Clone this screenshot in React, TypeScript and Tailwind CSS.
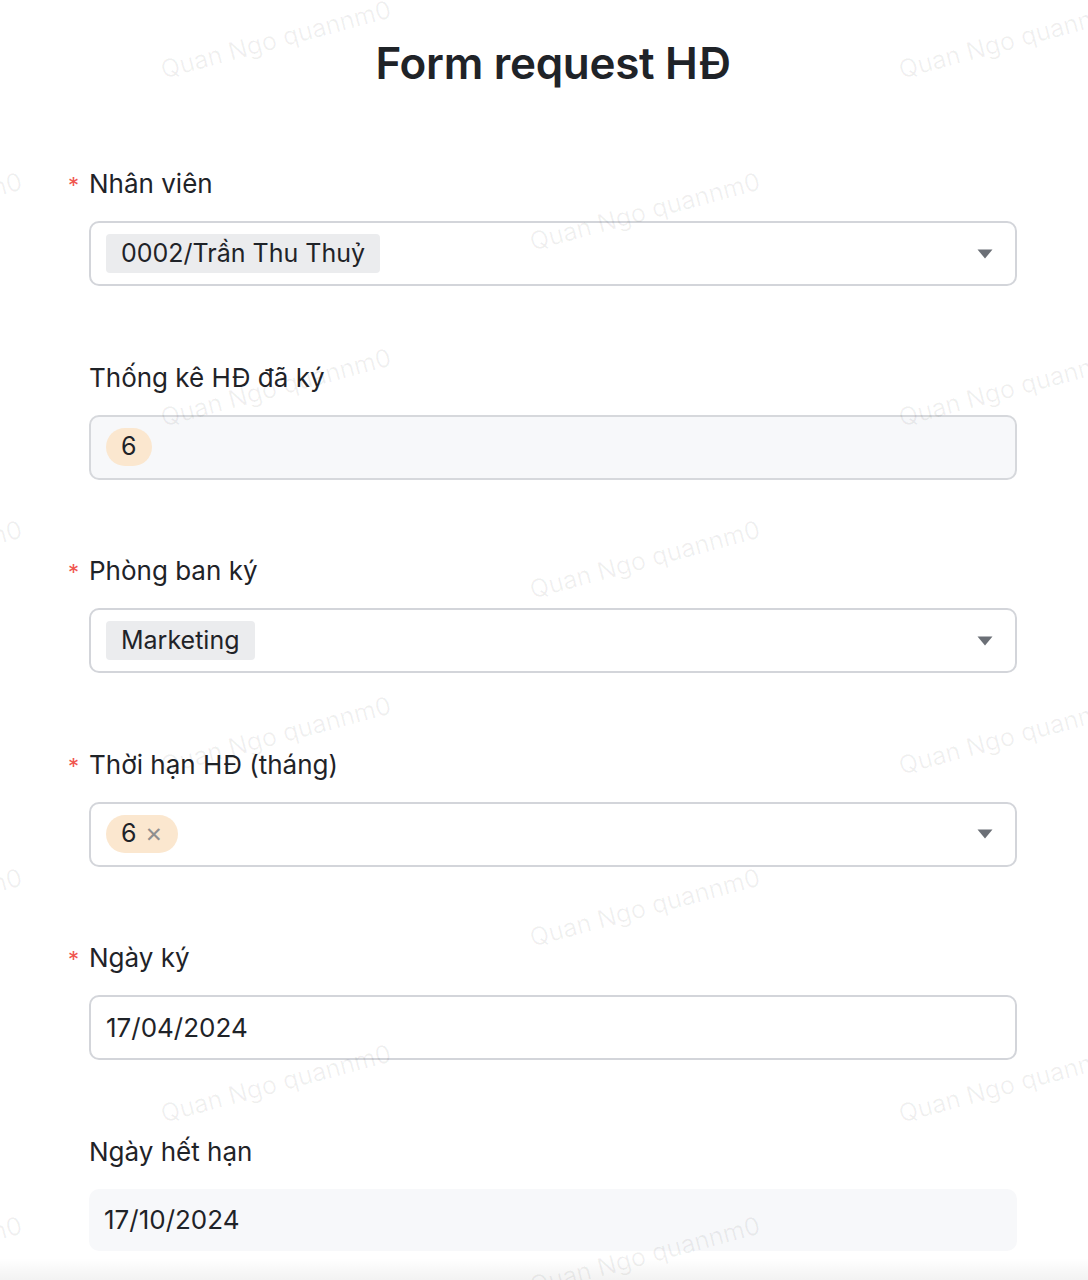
import React from 'react';

type Tag = { text: string; tone: 'gray' | 'peach'; closable?: boolean };

interface FieldProps {
  label: string;
  required?: boolean;
  disabled?: boolean;
  select?: boolean;
  tags?: Tag[];
  value?: string;
  plain?: boolean;
}

const Caret = () => (
  <svg width="16" height="10" viewBox="0 0 16 10" className="shrink-0">
    <path d="M0.5 0.5 H15.5 L8 9.5 Z" fill="#6b6f76" />
  </svg>
);

const TagChip = ({ tag }: { tag: Tag }) => {
  if (tag.tone === 'gray') {
    return (
      <span className="inline-flex h-[39px] items-center rounded-[4px] bg-[#ebecee] px-[15px] text-[25px] text-[#1f2328]">
        {tag.text}
      </span>
    );
  }
  return (
    <span className="inline-flex h-[38px] items-center gap-[8px] rounded-full bg-[#fbe7cf] px-[15px] text-[25px] text-[#1f2328]">
      {tag.text}
      {tag.closable && <span className="text-[21px] leading-none text-[#8f8f8f]">✕</span>}
    </span>
  );
};

const Field: React.FC<FieldProps> = ({ label, required, disabled, select, tags = [], value, plain }) => {
  const box = plain
    ? 'h-[62px] bg-[#f7f8fa]'
    : disabled
      ? 'h-[65px] border-2 border-[#d6d8dc] bg-[#f7f8fa]'
      : 'h-[65px] border-2 border-[#d3d5da] bg-white';

  return (
    <div className="mb-[73.5px] last:mb-0">
      <div className="flex h-[36px] items-center text-[26px] leading-[36px] text-[#1f2328]">
        <span className="-ml-[21px] w-[21px] self-start pt-[1px] text-[22px] text-[#f0564f]">
          {required ? '*' : ''}
        </span>
        {label}
      </div>
      <div className={`mt-[19px] flex items-center rounded-[10px] pl-[15px] pr-[22px] ${box}`}>
        <div className="flex flex-1 items-center gap-2">
          {tags.map((t, i) => (
            <TagChip key={i} tag={t} />
          ))}
          {value && <span className="text-[26px] text-[#1f2328]">{value}</span>}
        </div>
        {select && <Caret />}
      </div>
    </div>
  );
};

// staggered watermark grid
const marks: { x: number; y: number }[] = [];
for (let r = 0; r < 4; r++) {
  for (const x of [276, 1014]) marks.push({ x, y: 40 + r * 348 });
  for (const x of [-93, 645]) marks.push({ x, y: 212 + r * 348 });
}

export default function App() {
  return (
    <div className="relative h-[1280px] w-[1088px] overflow-hidden bg-white font-['Inter','Liberation_Sans',sans-serif]">
      <h1 className="pl-[89px] pr-[71px] pt-[30px] text-center text-[44px] font-semibold leading-[66px] tracking-[-0.3px] text-[#1f2328]">
        Form request HĐ
      </h1>

      <div className="mt-[70px] pl-[89px] pr-[71px]">
        <Field label="Nhân viên" required select tags={[{ text: '0002/Trần Thu Thuỷ', tone: 'gray' }]} />
        <Field label="Thống kê HĐ đã ký" disabled tags={[{ text: '6', tone: 'peach' }]} />
        <Field label="Phòng ban ký" required select tags={[{ text: 'Marketing', tone: 'gray' }]} />
        <Field
          label="Thời hạn HĐ (tháng)"
          required
          select
          tags={[{ text: '6', tone: 'peach', closable: true }]}
        />
        <Field label="Ngày ký" required value="17/04/2024" />
        <Field label="Ngày hết hạn" plain value="17/10/2024" />
      </div>

      {/* watermark */}
      <div className="pointer-events-none absolute inset-0">
        {marks.map((m, i) => (
          <span
            key={i}
            className="absolute -translate-x-1/2 -translate-y-1/2 -rotate-[15deg] whitespace-nowrap text-[25px] text-black/[0.06]"
            style={{ left: m.x, top: m.y }}
          >
            Quan Ngo quannm0
          </span>
        ))}
      </div>

      {/* sticky footer shadow */}
      <div className="pointer-events-none absolute inset-x-0 bottom-0 h-[22px] bg-gradient-to-b from-transparent to-black/[0.05]" />
    </div>
  );
}
